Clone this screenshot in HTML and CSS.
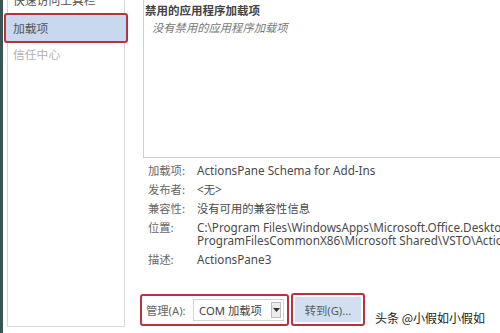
FILE: index.html
```
<!DOCTYPE html>
<html lang="zh-CN">
<head>
<meta charset="utf-8">
<title>加载项</title>
<link rel="stylesheet" href="styles.css">
</head>
<body>
<div class="app">
  <div class="edge"></div>
  <nav class="side">
    <div class="nav-list">
      <div class="nav-item nav-cut">快速访问工具栏</div>
      <div class="nav-item nav-sel">加载项</div>
      <div class="nav-item nav-dim">信任中心</div>
    </div>
  </nav>
  <main class="main">
    <section class="listbox">
      <div class="lb-title">禁用的应用程序加载项</div>
      <div class="lb-empty">没有禁用的应用程序加载项</div>
    </section>
    <div class="details">
      <div class="row"><span class="lbl">加载项:</span><span class="val">ActionsPane Schema for Add-Ins</span></div>
      <div class="row"><span class="lbl">发布者:</span><span class="val">&lt;<span class="cjk">无</span>&gt;</span></div>
      <div class="row"><span class="lbl">兼容性:</span><span class="val cjk">没有可用的兼容性信息</span></div>
      <div class="row"><span class="lbl">位置:</span><span class="val val-lines"><span class="line">C:\Program Files\WindowsApps\Microsoft.Office.Desktop_16051.11328.20158.0_x86__8wekyb3d8bbwe\VFS\</span><span class="line">ProgramFilesCommonX86\Microsoft Shared\VSTO\ActionsPane3.xsd</span></span></div>
      <div class="row"><span class="lbl">描述:</span><span class="val">ActionsPane3</span></div>
    </div>
    <div class="manage">
      <div class="hl manage-box">
        <span class="manage-lbl">管理(A):</span>
        <div class="select">
          <span class="select-text">COM 加载项</span>
          <span class="select-arrow"><svg width="7" height="4" viewBox="0 0 7 4"><path d="M0 0h7L3.5 4z" fill="#333"/></svg></span>
        </div>
      </div>
      <div class="hl go-box">
        <div class="go-btn">转到(G)...</div>
      </div>
      <div class="watermark">头条 @小假如小假如</div>
    </div>
  </main>
</div>
</body>
</html>
```
FILE: styles.css
```
html, body {
  margin: 0;
  padding: 0;
}
body {
  width: 500px;
  height: 333px;
  overflow: hidden;
  background: #ffffff;
  font-family: "Noto Sans", "Noto Sans CJK SC", sans-serif;
  font-size: 11.3px;
  color: #4a4a4a;
}
.app {
  display: flex;
  height: 333px;
  overflow: hidden;
}
.edge {
  width: 3px;
  background: #3c5454;
  flex: none;
}
.side {
  width: 122px;
  flex: none;
  padding: 0 0 6px 4px;
  box-sizing: border-box;
  display: flex;
}
.nav-list {
  flex: 1;
  margin-top: -14px;
  border: 1px solid #d9d9d9;
  background: #fff;
  display: flex;
  flex-direction: column;
}
.nav-item {
  padding-left: 5px;
  white-space: nowrap;
  color: #555;
  font-family: "Noto Sans CJK SC", sans-serif;
  font-size: 11.8px;
}
.nav-cut {
  height: 26px;
  line-height: 26px;
}
.nav-sel {
  margin: 0 -4px;
  padding-left: 7px;
  height: 30px;
  line-height: 26px;
  background: #c7d8ef;
  border: 2px solid #b8333f;
  border-radius: 3px;
  box-sizing: border-box;
}
.nav-dim {
  line-height: 22px;
  color: #b0b0b0;
}
.main {
  flex: 1;
  margin-left: 15px;
  min-width: 0;
  overflow: hidden;
  display: flex;
  flex-direction: column;
}
.listbox {
  margin-left: 3px;
  height: 158px;
  flex: none;
  box-sizing: border-box;
  border: 1px solid #cfcfcf;
  border-top: none;
  border-right: none;
  padding: 3px 0 0 1px;
  font-family: "Noto Sans CJK SC", sans-serif;
  line-height: 14px;
}
.lb-title {
  font-weight: bold;
  color: #444;
  font-size: 11.5px;
}
.lb-empty {
  font-style: italic;
  color: #777;
  padding-left: 7px;
  margin-top: 3px;
}
.details {
  margin-top: 6px;
  padding-left: 8px;
  display: flex;
  flex-direction: column;
  gap: 6px;
  line-height: 13px;
}
.row {
  display: flex;
  white-space: nowrap;
}
.lbl {
  width: 49px;
  flex: none;
  color: #666;
  font-family: "Noto Sans CJK SC", sans-serif;
}
.val {
  color: #4a4a4a;
  font-size: 11.7px;
}
.val-lines {
  display: flex;
  flex-direction: column;
}
.cjk {
  font-family: "Noto Sans CJK SC", sans-serif;
  font-size: 11.3px;
}
.manage {
  margin-top: 27px;
  display: flex;
  align-items: center;
  gap: 2px;
}
.hl {
  border: 2px solid #b8333f;
  border-radius: 3px;
  box-sizing: border-box;
  height: 32px;
  display: flex;
  align-items: center;
  flex: none;
}
.manage-box {
  width: 149px;
  padding-left: 4px;
}
.manage-lbl {
  width: 47px;
  color: #666;
  white-space: nowrap;
}
.select {
  width: 91px;
  height: 22px;
  box-sizing: border-box;
  border: 1px solid #d4d4d4;
  background: #fff;
  display: flex;
  align-items: center;
  padding: 0 2px 0 5px;
}
.select-text {
  flex: 1;
  white-space: nowrap;
  color: #444;
}
.select-arrow {
  width: 10px;
  height: 16px;
  box-sizing: border-box;
  border: 1px solid #bdbdbd;
  background: #ececec;
  display: flex;
  align-items: center;
  justify-content: center;
}
.go-box {
  width: 74px;
  height: 33px;
  padding: 2px;
}
.go-btn {
  flex: 1;
  height: 100%;
  background: #d2dff0;
  display: flex;
  align-items: center;
  justify-content: center;
  color: #5a5a5a;
  white-space: nowrap;
}
.watermark {
  margin-left: 8px;
  align-self: flex-end;
  margin-bottom: 0;
  font-family: "Noto Sans CJK SC", sans-serif;
  font-size: 12px;
  color: #222;
  white-space: nowrap;
}
```
